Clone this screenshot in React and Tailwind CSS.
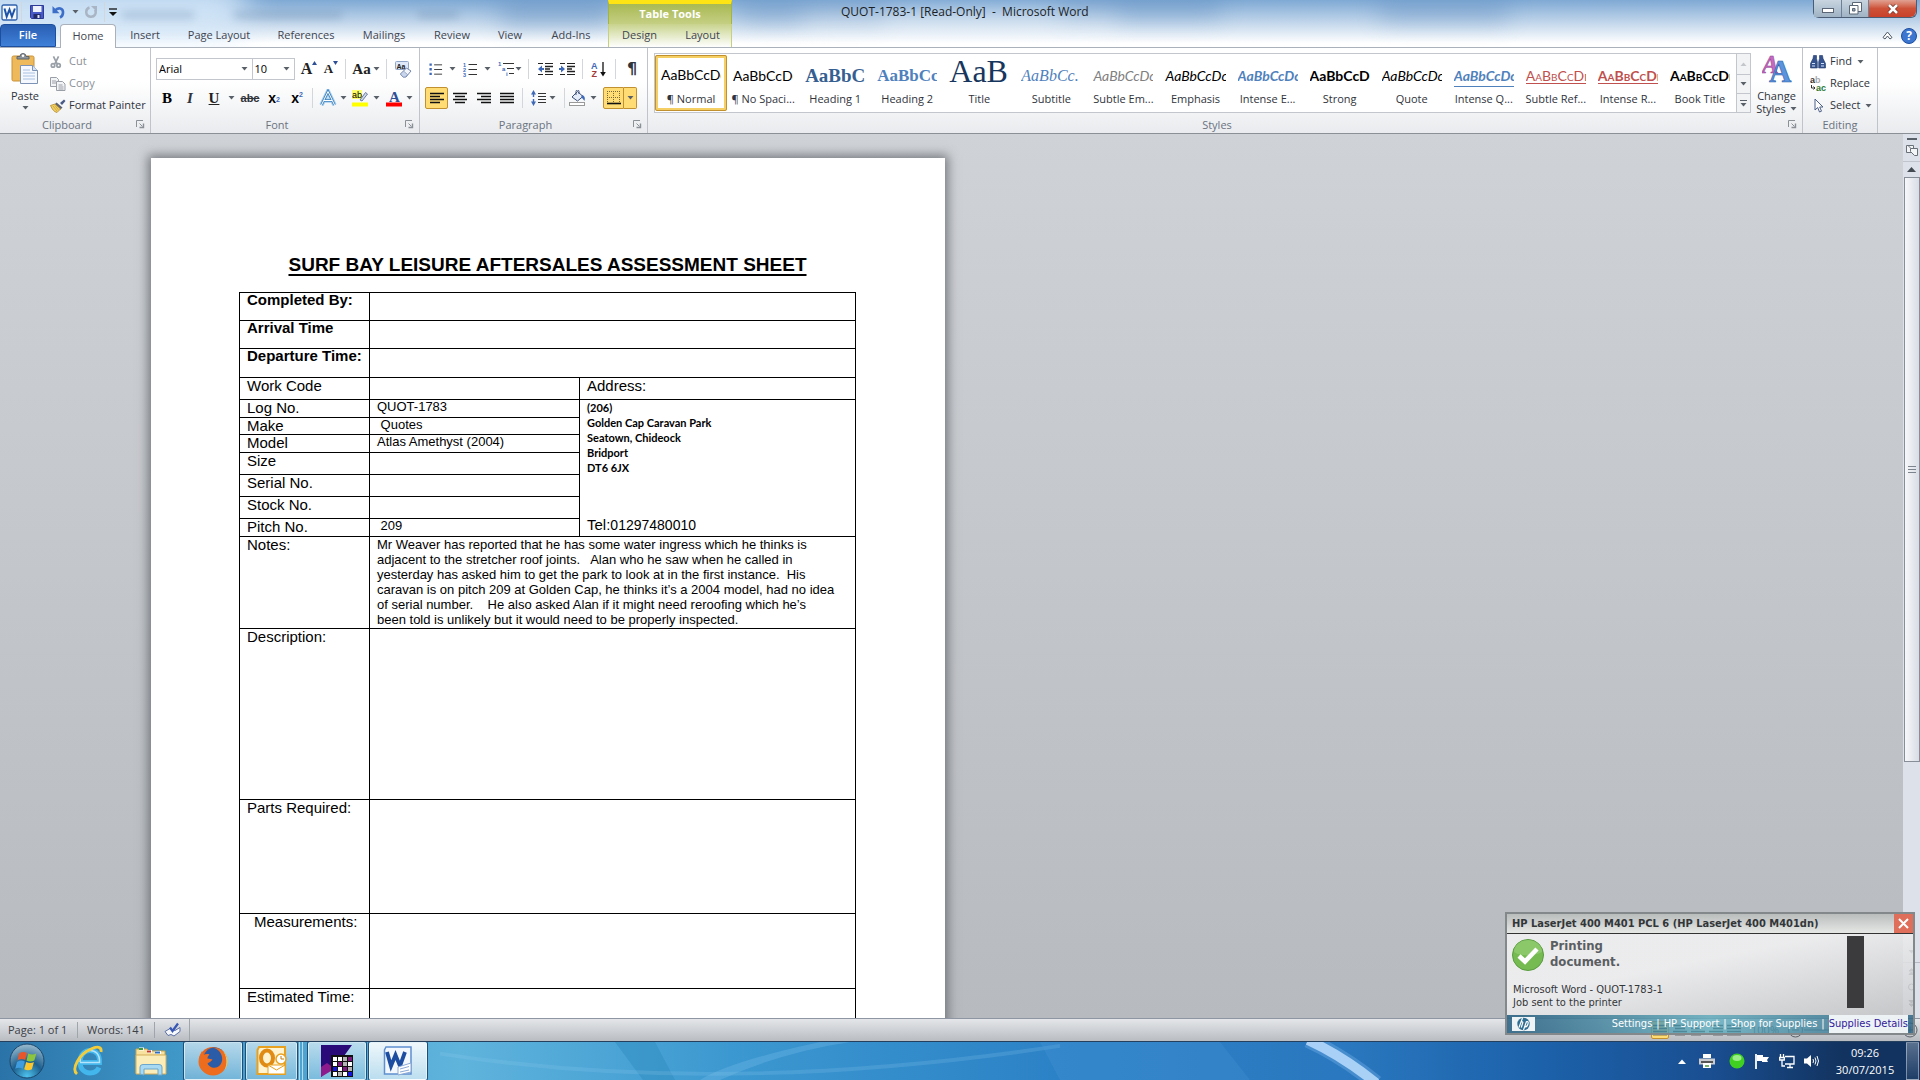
import React from "react";

const UI = "font-['Open_Sans','Noto_Sans',sans-serif]";
const DOC = "font-['Liberation_Sans',Arial,sans-serif]";

/* ---------- small shared pieces ---------- */

function Caret({ className = "" }) {
  return (
    <svg width="7" height="4" viewBox="0 0 7 4" className={"shrink-0 " + className} aria-hidden="true">
      <path d="M0.5 0h6L3.5 3.5z" fill="#5a6068" />
    </svg>
  );
}

function Cell({ label, w, children, className = "" }) {
  return (
    <button type="button" aria-label={label} className={`flex h-[22px] shrink-0 items-center justify-center ${w} ${className}`}>
      {children}
    </button>
  );
}

function Sep({ className = "" }) {
  return <span className={"h-5 w-px shrink-0 bg-[#d3d6db] " + className} />;
}

function Launcher({ label }) {
  return (
    <button type="button" aria-label={label} className="absolute right-1 bottom-1 h-2.5 w-2.5">
      <svg width="9" height="9" viewBox="0 0 9 9" fill="none" stroke="#8b9097">
        <path d="M0.5 7V0.5H7M3.5 3.5l3 3" />
        <path d="M7.5 3.5v4h-4" strokeWidth="1.4" />
      </svg>
    </button>
  );
}

function Group({ title, launcher, className = "", children }) {
  return (
    <section aria-label={title} className={"relative flex h-full shrink-0 flex-col border-r border-[#c0c4ca] " + className}>
      <div className="h-[69px]">{children}</div>
      <div className={"text-center leading-4 text-[#6b7380] " + (launcher ? "pr-4" : "")}>{title}</div>
      {launcher && <Launcher label={title + " options"} />}
    </section>
  );
}

/* ---------- title bar icons ---------- */

const WordLogo = () => (
  <svg width="17" height="17" viewBox="0 0 17 17">
    <rect x="1" y="1" width="15" height="15" rx="1.5" fill="#f4f8fd" stroke="#2f62ad" strokeWidth="1.3" />
    <path d="M3.500 4.500l2.200 8 2.800-7 2.400 7 3-8" fill="none" stroke="#1d54a8" strokeWidth="2" />
  </svg>
);
const Save = () => (
  <svg width="16" height="16" viewBox="0 0 16 16">
    <path d="M1.5 1.5h13v13h-12l-1-1z" fill="#4659c4" stroke="#2d3a96" />
    <rect x="4" y="2" width="8.5" height="6" fill="#eef2fb" />
    <rect x="4.5" y="10" width="7" height="4.5" fill="#1f2a66" />
    <rect x="8.5" y="11" width="2" height="3" fill="#dfe4f5" />
  </svg>
);
const Undo = () => (
  <svg width="14" height="14" viewBox="0 0 14 14">
    <path d="M3 5.500C6 2 11.500 3 11 8c-.2 2-1.500 3.800-3 4.500" fill="none" stroke="#3d6fc9" strokeWidth="2.600" />
    <path d="M0.500 1v7.200h7z" fill="#3d6fc9" />
  </svg>
);
const Redo = () => (
  <svg width="13" height="14" viewBox="0 0 13 14">
    <path d="M4.500 2.500C0 4 0 11 5.500 11.800c4 .4 6.500-3.500 4.500-7" fill="none" stroke="#a9b5c4" strokeWidth="2.500" />
    <path d="M6 1h6v6z" fill="#a9b5c4" />
  </svg>
);

/* ---------- ribbon icons ---------- */

const Paste = () => (
  <svg width="28" height="32" viewBox="0 0 28 32">
    <rect x="1" y="3" width="22" height="25" rx="1.500" fill="#eeb95a" stroke="#c8923a" />
    <path d="M6 6h12V3.500h-3a3 3 0 0 0-6 0H6z" fill="#8f959d" stroke="#5f656d" />
    <circle cx="12" cy="2.800" r="1.200" fill="#fff" />
    <path d="M9.500 12.500h12l5 5v13h-17z" fill="#f5f9ff" stroke="#7d93b5" />
    <path d="M21.500 12.500v5h5" fill="#d6e2f3" stroke="#7d93b5" />
    <path d="M12 17h7M12 20h12M12 23h12M12 26h12" stroke="#a9c0e2" />
  </svg>
);
const Cut = () => (
  <svg width="12" height="14" viewBox="0 0 14 15" fill="none" stroke="#9aa0a8" strokeWidth="2">
    <path d="M4 1l4.500 9M10 1L5.500 10" />
    <circle cx="3.500" cy="11.500" r="2" />
    <circle cx="10" cy="11.500" r="2" />
  </svg>
);
const Copy = () => (
  <svg width="16" height="14" viewBox="0 0 16 14" fill="#f3f4f6" stroke="#9a9fa7">
    <path d="M.5.5h6l2 2v7h-8z" />
    <path d="M2 4h4M2 6h4" />
    <path d="M6.500 4.500h6l2.500 2.500v6.500H6.500z" />
    <path d="M8.500 8h4M8.500 10h5M8.500 12h5" />
  </svg>
);
const Painter = () => (
  <svg width="16" height="14" viewBox="0 0 16 14">
    <path d="M10 4l4-3.500 1.500 1.500-3.500 4z" fill="#4a5a86" />
    <path d="M6.500 3.500l6 5-2 2-6-5z" fill="#5b6172" />
    <path d="M.5 6.500l4.500-1.500 5.500 5L7 13.500C4 13 2 10 .5 6.500z" fill="#f0cf63" stroke="#b48a2c" strokeWidth=".8" />
    <path d="M3 7l4 5M5 6.500l3.500 4.500" stroke="#c59a36" strokeWidth=".7" />
  </svg>
);
const ClearFormat = () => (
  <svg width="17" height="17" viewBox="0 0 17 17">
    <rect x=".5" y=".5" width="13" height="8" rx="1" fill="#dfe9f7" stroke="#8fa6c8" />
    <text x="1.500" y="7.500" fontSize="7" fontWeight="700" fill="#222" className="font-['Liberation_Sans',sans-serif]">Aa</text>
    <path d="M5.500 13l6-6 4.500 3-5 6H8z" fill="#f3f6fb" stroke="#7287b0" />
    <path d="M5.500 13l3-3 4 3.500-2 2.500H8z" fill="#c9d5ea" stroke="#7287b0" strokeWidth=".6" />
  </svg>
);
const Bullets = () => (
  <svg width="15" height="15" viewBox="0 0 15 15">
    <path d="M5.500 2.500H14M5.500 7.500H14M5.500 12.500H14" stroke="#333" />
    <path d="M.5 1h2.500v2.500H.5zM.5 6h2.500v2.500H.5zM.5 11h2.500v2.500H.5z" fill="#3e68b8" />
  </svg>
);
const Numbers = () => (
  <svg width="15" height="15" viewBox="0 0 15 15">
    <path d="M5.500 2.500H14M5.500 7.500H14M5.500 12.500H14" stroke="#333" />
    <g fontSize="5.500" fontWeight="700" fill="#3e68b8" className="font-['Liberation_Sans',sans-serif]">
      <text x="0" y="4.500">1</text><text x="0" y="9.500">2</text><text x="0" y="14.500">3</text>
    </g>
  </svg>
);
const Multi = () => (
  <svg width="17" height="16" viewBox="0 0 17 16">
    <path d="M5 2.500H16M9 7.500H16M11 12.500H16" stroke="#333" />
    <g fontSize="6" fontWeight="700" fill="#3e68b8" className="font-['Liberation_Sans',sans-serif]">
      <text x="0" y="4.500">1</text><text x="4" y="10">a</text><text x="8" y="15">i</text>
    </g>
  </svg>
);
const Indent = ({ out }) => (
  <svg width="16" height="14" viewBox="0 0 16 14">
    <path d="M1 1.500H6M8 1.500h8M1 12.500H6M8 12.500h8" stroke="#222" />
    <path d="M8 4.500h8M8 7h5M8 9.500h8" stroke="#222" strokeWidth="1.500" />
    {out ? <path d="M5 3.500L1 7l4 3.500V8h2V6H5z" fill="#3e68b8" /> : <path d="M2 3.500L6 7l-4 3.500V8H0V6h2z" fill="#3e68b8" />}
  </svg>
);
const Sort = () => (
  <svg width="16" height="17" viewBox="0 0 16 17">
    <g fontSize="9" fontWeight="700" className="font-['Liberation_Sans',sans-serif]">
      <text x="0" y="7.500" fill="#3e68b8">A</text>
      <text x="0.500" y="16" fill="#a23a3a">Z</text>
    </g>
    <path d="M12 1v12" stroke="#111" strokeWidth="1.300" />
    <path d="M9.200 11h5.600L12 15.500z" fill="#111" />
  </svg>
);
const LINES = {
  left: "M0 1.500h14M0 4.500h10M0 7.500h14M0 10.500h10",
  center: "M0 1.500h14M2 4.500h10M0 7.500h14M2 10.500h10",
  right: "M0 1.500h14M4 4.500h10M0 7.500h14M4 10.500h10",
  justify: "M0 1.500h14M0 4.500h14M0 7.500h14M0 10.500h14",
};
const Align = ({ kind }) => (
  <svg width="14" height="12" viewBox="0 0 14 12"><path d={LINES[kind]} stroke="#111" strokeWidth="1.500" /></svg>
);
const Spacing = () => (
  <svg width="16" height="16" viewBox="0 0 16 16">
    <path d="M7 3.500h8M7 6.500h8M7 9.500h8M7 12.500h8" stroke="#333" strokeWidth="1.200" />
    <path d="M2.500 3v10" stroke="#3e68b8" strokeDasharray="4 2" strokeWidth="1.400" />
    <path d="M0 4.500L2.500 0 5 4.500zM0 11.500L2.500 16 5 11.500z" fill="#3e68b8" />
  </svg>
);
const Fill = () => (
  <svg width="17" height="16" viewBox="0 0 17 16">
    <path d="M3 7l5.500-5.500L14 6.500 8.500 11z" fill="#e6edf8" stroke="#3c4f78" />
    <path d="M7 5V1.500a1.500 1.500 0 0 1 3 0V4" fill="none" stroke="#3c4f78" />
    <path d="M13 5c2.500.5 3.500 2.500 2.500 6-1-1.500-2-3-3.500-3.500z" fill="#3e68b8" />
    <rect x=".5" y="12.500" width="15" height="3" fill="#fff" stroke="#999" />
  </svg>
);
const Borders = () => (
  <svg width="14" height="14" viewBox="0 0 14 14">
    <path d="M.5 0v12M6.500 0v12M12.500 0v12M0 .5h13M0 6.500h13" stroke="#7a6a3a" strokeDasharray="1 1" />
    <path d="M0 12.500h14" stroke="#111" strokeWidth="1.600" />
  </svg>
);
const ChangeStylesIcon = () => (
  <svg width="30" height="30" viewBox="0 0 30 30" className="font-['Liberation_Serif',serif]">
    <text x="0" y="20" fontSize="25" fontWeight="700" fontStyle="italic" fill="#c46ac0" stroke="#93408f" strokeWidth=".5">A</text>
    <text x="7" y="29" fontSize="31" fontWeight="700" fill="#5b93dd" stroke="#2c5ba6" strokeWidth=".6">A</text>
  </svg>
);
const Binoculars = () => (
  <svg width="16" height="14" viewBox="0 0 16 14" fill="#35548f" stroke="#1f3768" strokeWidth=".6">
    <path d="M3.500.5h3v3l.8 3.500v6H.5V8.500L3 3.500z" />
    <path d="M9.500.5h3L13 3.500l2.500 5V13H8.700V7l.8-3.500z" />
    <path d="M2 8.500h3M11 8.500h3M2 11h3M11 11h3" stroke="#cfe0fa" strokeWidth="1.200" />
  </svg>
);
const ReplaceIcon = () => (
  <svg width="17" height="16" viewBox="0 0 17 16">
    <g fontSize="9" fontWeight="700" className="font-['Liberation_Sans',sans-serif]">
      <text x="0" y="7" fill="#333">a</text><text x="5" y="7" fill="#aaa">b</text>
      <text x="6" y="15" fill="#2c7a35">ac</text>
    </g>
    <path d="M1.500 9v3h3M3.500 10.500L5 12l-1.500 1.500" fill="none" stroke="#333" />
  </svg>
);
const Pointer = () => (
  <svg width="10" height="15" viewBox="0 0 10 15"><path d="M1 1v11l2.700-2.500 1.800 4.500 2-.8-1.800-4.200H9z" fill="#fff" stroke="#4d6087" /></svg>
);

/* ---------- header ---------- */

const TABS = [
  ["Insert", "w-[58px]"], ["Page Layout", "w-[90px]"], ["References", "w-[84px]"], ["Mailings", "w-[72px]"],
  ["Review", "w-[64px]"], ["View", "w-[52px]"], ["Add-Ins", "w-[70px]"],
];

function Header() {
  return (
    <header className="relative overflow-hidden bg-linear-to-b from-[#7fa9d4] via-[#c6d9ec] to-white to-90%">
      <div aria-hidden="true" className="absolute inset-0">
        <div className="absolute -top-6 -left-10 h-16 w-72 rounded-full bg-[#d9ebfb] opacity-80 blur-lg" />
        <div className="absolute top-0 left-[500px] h-6 w-28 bg-[#5583b8] opacity-45 blur-md" />
        <div className="absolute top-0 left-[740px] h-5 w-36 bg-[#5583b8] opacity-40 blur-md" />
        <div className="absolute -top-1 left-[1060px] h-5 w-40 bg-[#5583b8] opacity-40 blur-md" />
        <div className="absolute top-0 left-[1380px] h-5 w-32 bg-[#5583b8] opacity-40 blur-md" />
        <div className="absolute top-3 left-[122px] h-1.5 w-[72px] bg-[#55779d] opacity-35 blur-xs" />
        <div className="absolute top-3 left-[234px] h-1.5 w-[108px] bg-[#55779d] opacity-35 blur-xs" />
        <div className="absolute top-3 left-[418px] h-1.5 w-10 bg-[#55779d] opacity-35 blur-xs" />
        <div className="absolute top-3 left-[800px] h-7 w-[320px] rounded-full bg-white opacity-30 blur-md" />
      </div>
      <div className="relative flex h-6">
        <div className="flex w-[608px] shrink-0 items-center">
          <span className="ml-px"><WordLogo /></span>
          <Sep className="ml-[3px] h-3.5 bg-[#7c93ad]" />
          <button type="button" aria-label="Save" className="ml-[7px]"><Save /></button>
          <button type="button" aria-label="Undo" className="ml-[7px]"><Undo /></button>
          <button type="button" aria-label="Undo list" className="ml-1.5"><Caret /></button>
          <button type="button" aria-label="Redo" className="ml-1.5"><Redo /></button>
          <Sep className="ml-1.5 h-3.5 bg-[#7c93ad]" />
          <button type="button" aria-label="Customise toolbar" className="ml-1">
            <svg width="8" height="8" viewBox="0 0 8 8"><path d="M0 1h8" stroke="#111" strokeWidth="1.300" /><path d="M0 4h8L4 8z" fill="#111" /></svg>
          </button>
        </div>
        <div className="w-[124px] shrink-0 border-x border-t-4 border-x-[#a5b537] border-t-[#ffe414] bg-linear-to-b from-[#a9b952] to-[#c5cf83] text-center text-[11px] leading-5 font-bold text-white">
          Table Tools
        </div>
        <h1 className="ml-[109px] grow text-[12px] leading-6 whitespace-pre text-[#1b1f26]">QUOT-1783-1 [Read-Only]  -  Microsoft Word</h1>
        <div className="mr-[3px] flex h-[18px] rounded-b-md border border-t-0 border-[#4a5d75]">
          <button type="button" aria-label="Minimise" className="flex w-7 items-center justify-center border-r border-[#6d8099] bg-linear-to-b from-[#c9d5e0] to-[#9fb3c4]">
            <span className="mt-1 h-[5px] w-3 border border-[#5a6675] bg-white" />
          </button>
          <button type="button" aria-label="Restore" className="flex w-[27px] items-center justify-center border-r border-[#6d8099] bg-linear-to-b from-[#c9d5e0] to-[#9fb3c4]">
            <svg width="13" height="13" viewBox="0 0 13 13" fill="#fff" stroke="#5a6675">
              <path d="M3.500.5h9v9h-9z" /><path d="M.5 3.500h8.500v8.500H.5z" /><path d="M3.500 6.500h2.500v2.500H3.500z" fill="#8fa3b5" />
            </svg>
          </button>
          <button type="button" aria-label="Close" className="flex w-[47px] items-center justify-center rounded-br-md bg-linear-to-b from-[#e0a192] via-[#cd5138] to-[#c9412a]">
            <svg width="12" height="10" viewBox="0 0 12 10"><path d="M2 1l8 8M10 1L2 9" stroke="#6d2c20" strokeWidth="4" /><path d="M2 1l8 8M10 1L2 9" stroke="#fff" strokeWidth="2.600" /></svg>
          </button>
        </div>
      </div>
      <nav aria-label="Ribbon tabs" className="relative flex h-6 items-stretch border-b border-[#aab1bb] text-[11px] text-[#3f4550]">
        <button type="button" className="w-14 rounded-t-sm border border-[#1d4f9e] bg-linear-to-b from-[#2a5fb3] to-[#3f80d8] font-semibold text-white">File</button>
        <button type="button" className="-mb-px ml-1 w-14 rounded-t-sm border border-b-0 border-[#aab1bb] bg-white">Home</button>
        {TABS.map(([name, w]) => (
          <button key={name} type="button" className={w}>{name}</button>
        ))}
        <div className="ml-0.5 flex w-[124px] shrink-0 border-x border-[#c7d17d] bg-linear-to-b from-[#c9d38c] to-white">
          <button type="button" className="w-1/2">Design</button>
          <button type="button" className="w-1/2 pl-1">Layout</button>
        </div>
        <div className="grow" />
        <button type="button" aria-label="Minimise ribbon" className="mr-2">
          <svg width="11" height="9" viewBox="0 0 11 9"><path d="M1 6.500L5.500 1 10 6.500 8 8 5.500 5 3 8z" fill="#fff" stroke="#4b5563" /></svg>
        </button>
        <button type="button" aria-label="Help" className="mr-[3px] h-4 w-4 self-center rounded-full border border-[#1f4fa0] bg-[#3c76cf] text-[12px] leading-[14px] font-bold text-white">?</button>
      </nav>
    </header>
  );
}

/* ---------- ribbon ---------- */

const CAL = "font-['Lato',sans-serif] text-[14px]";
const STYLES = [
  ["¶ Normal", "AaBbCcDc", CAL],
  ["¶ No Spaci...", "AaBbCcDc", CAL],
  ["Heading 1", "AaBbC(", "font-['Liberation_Serif',serif] text-[19px] font-bold text-[#365f91]"],
  ["Heading 2", "AaBbCc", "font-['Liberation_Serif',serif] text-[17px] font-bold text-[#4f81bd]"],
  ["Title", "AaB", "font-['Liberation_Serif',serif] text-[32px] text-[#17365d]"],
  ["Subtitle", "AaBbCc.", "font-['Liberation_Serif',serif] text-[16px] italic text-[#4f81bd]"],
  ["Subtle Em...", "AaBbCcDc", CAL + " italic text-[#808080]"],
  ["Emphasis", "AaBbCcDc", CAL + " italic"],
  ["Intense E...", "AaBbCcDc", CAL + " italic font-bold text-[#4f81bd]"],
  ["Strong", "AaBbCcDc", CAL + " font-bold"],
  ["Quote", "AaBbCcDc", CAL + " italic"],
  ["Intense Q...", "AaBbCcDc", CAL + " italic font-bold text-[#4f81bd] border-b border-[#4f81bd]"],
  ["Subtle Ref...", "AaBbCcDd", CAL + " [font-variant:small-caps] text-[#c0504d] underline underline-offset-2"],
  ["Intense R...", "AaBbCcDd", CAL + " [font-variant:small-caps] font-bold text-[#c0504d] underline underline-offset-2"],
  ["Book Title", "AaBbCcDd", CAL + " [font-variant:small-caps] font-bold"],
];

function Ribbon() {
  const serif = "font-['Liberation_Serif',serif] font-bold text-[#222]";
  return (
    <div className="relative z-10 flex h-[86px] border-b border-[#8b9097] bg-linear-to-b from-white from-40% to-[#e9ebee] text-[11px] text-[#30343b]">
      <Group title="Clipboard" launcher className="w-[151px]">
        <div className="flex pt-[5px]">
          <button type="button" className="flex w-[50px] flex-col items-center leading-4">
            <Paste /><span className="mt-[3px]">Paste</span><Caret className="mt-0.5" />
          </button>
          <div className="flex flex-col text-[#8b9097]">
            <button type="button" className="flex h-[17px] items-center"><span className="flex w-[19px]"><Cut /></span>Cut</button>
            <button type="button" className="mt-[5px] flex h-[17px] items-center"><span className="flex w-[19px]"><Copy /></span>Copy</button>
            <button type="button" className="mt-[5px] flex h-[17px] items-center whitespace-nowrap text-[#30343b]"><span className="flex w-[19px]"><Painter /></span>Format Painter</button>
          </div>
        </div>
      </Group>

      <Group title="Font" launcher className="w-[269px]">
        <div className="flex items-center pt-2.5 pl-[5px]">
          <label className="flex h-[22px] w-[98px] items-center border border-[#c3c7cd] bg-white pr-1">
            <input aria-label="Font name" defaultValue="Arial" className="w-full min-w-0 pl-0.5 text-black outline-none" /><Caret />
          </label>
          <label className="flex h-[22px] w-[43px] items-center border border-l-0 border-[#c3c7cd] bg-white pr-1">
            <input aria-label="Font size" defaultValue="10" className="w-full min-w-0 pl-0.5 text-black outline-none" /><Caret />
          </label>
          <Cell label="Grow font" w="w-6" className={serif + " ml-0.5 text-[16px]"}>A<svg width="5" height="4" className="mb-3"><path d="M0 4L2.500 0 5 4z" fill="#2d4f96" /></svg></Cell>
          <Cell label="Shrink font" w="w-5" className={serif + " text-[13px]"}>A<svg width="5" height="4" className="mb-3"><path d="M0 0h5L2.500 4z" fill="#2d4f96" /></svg></Cell>
          <Sep className="ml-1" />
          <Cell label="Change case" w="w-10" className={serif + " gap-0.5 text-[15px]"}>Aa<Caret /></Cell>
          <Sep />
          <Cell label="Clear formatting" w="w-8"><ClearFormat /></Cell>
        </div>
        <div className="flex items-center pt-[7px] pl-[5px]">
          <Cell label="Bold" w="w-[22px]" className={serif + " text-[15px] text-black"}>B</Cell>
          <Cell label="Italic" w="w-6" className="font-['Liberation_Serif',serif] text-[15px] font-bold italic">I</Cell>
          <Cell label="Underline" w="w-6" className={serif + " text-[15px] underline"}>U</Cell>
          <Cell label="Underline style" w="w-2.5"><Caret /></Cell>
          <Cell label="Strikethrough" w="w-7" className="font-['Liberation_Sans',sans-serif] text-[11px] font-bold line-through">abc</Cell>
          <Cell label="Subscript" w="w-5" className="font-['Liberation_Sans',sans-serif] text-[14px] font-bold text-black">x<sub className="text-[7px] text-[#3e68b8]">2</sub></Cell>
          <Cell label="Superscript" w="w-[26px]" className="font-['Liberation_Sans',sans-serif] text-[14px] font-bold text-black">x<sup className="text-[7px] text-[#3e68b8]">2</sup></Cell>
          <Sep className="ml-0.5" />
          <Cell label="Text effects" w="w-[36px]" className="gap-0.5 pl-1">
            <svg width="19" height="18" viewBox="0 0 19 18"><path d="M2.500 16L9 2.500 15.500 16M5 11.500h8" fill="none" stroke="#a9d0ee" strokeWidth="4.500" /><path d="M2.500 16L9 2.500 15.500 16M5 11.500h8" fill="none" stroke="#3f83c0" strokeWidth="2.600" /><path d="M2.500 16L9 2.500 15.500 16M5 11.500h8" fill="none" stroke="#fff" strokeWidth="1" /></svg>
            <Caret />
          </Cell>
          <Cell label="Highlight" w="w-[34px]" className="gap-1">
            <svg width="17" height="17" viewBox="0 0 17 17">
              <rect width="10" height="9" fill="#ffff6a" /><text x="0" y="8" fontSize="9" className="font-['Liberation_Sans',sans-serif]">ab</text>
              <path d="M8 10l5.500-7.500 2 1.500L10 11z" fill="#cfd9ea" stroke="#4c5f8a" strokeWidth=".8" /><rect y="12.500" width="16" height="4" fill="#ffff00" />
            </svg>
            <Caret />
          </Cell>
          <Cell label="Font colour" w="w-[33px]" className="gap-1">
            <svg width="16" height="17" viewBox="0 0 16 17"><text x="3" y="12" fontSize="15" fontWeight="700" fill="#2d4f96" className="font-['Liberation_Serif',serif]">A</text><rect y="12.500" width="16" height="4" fill="#f00" /></svg>
            <Caret />
          </Cell>
        </div>
      </Group>

      <Group title="Paragraph" launcher className="w-[228px]">
        <div className="flex items-center pt-2.5 pl-[9px]">
          <Cell label="Bullets" w="w-[27px]" className="gap-1.5"><Bullets /><Caret /></Cell>
          <Cell label="Numbering" w="w-[28px]" className="ml-[7px] gap-1.5"><Numbers /><Caret /></Cell>
          <Cell label="Multilevel list" w="w-[25px]" className="ml-1.5"><Multi /><Caret /></Cell>
          <Sep className="ml-1.5" />
          <Cell label="Decrease indent" w="w-[22px]" className="ml-[5px]"><Indent out /></Cell>
          <Cell label="Increase indent" w="w-[22px]"><Indent /></Cell>
          <Sep className="ml-1" />
          <Cell label="Sort" w="w-[32px]"><Sort /></Cell>
          <Sep />
          <Cell label="Show marks" w="w-[32px]" className="font-['DejaVu_Sans',sans-serif] text-[16px] font-bold">¶</Cell>
        </div>
        <div className="flex items-center pt-[7px] pl-[5px]">
          <Cell label="Align left" w="w-[23px]" className="rounded-xs border border-[#c2912f] bg-[#ffdc74]"><Align kind="left" /></Cell>
          <Cell label="Centre" w="w-6"><Align kind="center" /></Cell>
          <Cell label="Align right" w="w-6"><Align kind="right" /></Cell>
          <Cell label="Justify" w="w-[22px]"><Align kind="justify" /></Cell>
          <Sep className="ml-1" />
          <Cell label="Line spacing" w="w-[41px]" className="gap-0.5"><Spacing /><Caret /></Cell>
          <Sep />
          <Cell label="Shading" w="w-[36px]" className="gap-1"><Fill /><Caret /></Cell>
          <Cell label="Borders" w="w-[21px]" className="ml-0.5 rounded-l-xs border border-[#c2912f] bg-[#ffdc74]"><Borders /></Cell>
          <Cell label="Border options" w="w-[13px]" className="rounded-r-xs border border-l-0 border-[#c2912f] bg-[#ffdc74]"><Caret /></Cell>
        </div>
      </Group>

      <Group title="Styles" launcher className="min-w-0 flex-1">
        <div className="flex pt-[5px] pl-1.5">
          <div className="flex h-[60px] min-w-0 grow border border-[#c3c7cd] bg-white">
            <div className="grid min-w-0 grow grid-cols-15">
              {STYLES.map(([name, sample, cls], i) => (
                <button
                  key={name}
                  type="button"
                  className={
                    "mt-px flex h-14 min-w-0 flex-col items-center justify-between overflow-hidden rounded-xs " +
                    (i === 0 ? "border-3 border-[#f5cf63] px-[3px] pb-px outline outline-[#c2912f] -outline-offset-1" : "px-1.5 py-1")
                  }
                >
                  <span className="flex h-[30px] w-full items-center overflow-hidden whitespace-nowrap text-black">
                    <span className={cls + (name === "Title" ? " mb-1.5 leading-6" : " mt-1 leading-5")}>{sample}</span>
                  </span>
                  <span className="leading-4 whitespace-nowrap text-[#30343b]">{name}</span>
                </button>
              ))}
            </div>
            <div className="flex w-3.5 shrink-0 flex-col border-l border-[#c3c7cd] bg-[#f2f3f5]">
              <button type="button" aria-label="Previous styles" className="flex h-5 items-center justify-center opacity-30"><Caret className="rotate-180" /></button>
              <button type="button" aria-label="Next styles" className="flex h-5 items-center justify-center border-y border-[#c3c7cd]"><Caret /></button>
              <button type="button" aria-label="All styles" className="flex grow flex-col items-center justify-center gap-0.5"><span className="h-px w-[7px] bg-[#5a6068]" /><Caret /></button>
            </div>
          </div>
          <button type="button" className="flex w-[51px] shrink-0 flex-col items-center leading-[13px]">
            <ChangeStylesIcon />
            <span className="mt-1.5">Change</span>
            <span className="flex items-center gap-1">Styles <Caret /></span>
          </button>
        </div>
      </Group>

      <Group title="Editing" className="w-[75px]">
        <div className="flex flex-col pt-[5px] pl-[7px]">
          <button type="button" className="flex h-[17px] items-center"><span className="flex w-5"><Binoculars /></span>Find<Caret className="ml-[5px]" /></button>
          <button type="button" className="mt-[5px] flex h-[17px] items-center"><span className="flex w-5"><ReplaceIcon /></span>Replace</button>
          <button type="button" className="mt-[5px] flex h-[17px] items-center"><span className="flex w-5 pl-1"><Pointer /></span>Select<Caret className="ml-[5px]" /></button>
        </div>
      </Group>
      <div className="w-[42px] shrink-0" />
    </div>
  );
}

/* ---------- document ---------- */

function Row({ h, label, bold, children }) {
  return (
    <tr className={h}>
      <th scope="row" className={`border border-black pl-[7px] text-left align-top whitespace-nowrap ${bold ? "leading-[14px] font-bold" : "font-normal"}`}>{label}</th>
      <td colSpan={2} className="border border-black pl-[7px] align-top text-[13px] leading-[15px]">{children}</td>
    </tr>
  );
}

function SplitRow({ h, label, value = "", right }) {
  return (
    <tr className={h}>
      <th scope="row" className="border border-black pl-[7px] text-left align-top font-normal whitespace-nowrap">{label}</th>
      <td className="border border-black pl-[7px] align-top text-[13px] leading-[13px] whitespace-pre">{value}</td>
      {right}
    </tr>
  );
}

function Document() {
  return (
    <article className={DOC + " ml-[151px] h-[1123px] w-[794px] shrink-0 bg-white pt-24 pl-[88px] text-black shadow-[0_0_10px_3px_rgba(90,95,102,0.75)]"}>
      <h2 className="w-[617px] text-center text-[19px] leading-[22px] font-bold whitespace-nowrap underline decoration-2 underline-offset-3">SURF BAY LEISURE AFTERSALES ASSESSMENT SHEET</h2>
      <table className="mt-4 w-[617px] table-fixed border-collapse text-[15px] leading-4">
        <colgroup><col className="w-[130px]" /><col className="w-[210px]" /><col /></colgroup>
        <tbody>
          <Row h="h-7" label="Completed By:" bold />
          <Row h="h-7" label="Arrival Time" bold />
          <Row h="h-[29px]" label="Departure Time:" bold />
          <SplitRow h="h-[22px]" label="Work Code" right={<td className="border border-black pl-[7px] align-top">Address:</td>} />
          <SplitRow
            h="h-[18px]"
            label="Log No."
            value="QUOT-1783"
            right={
              <td rowSpan={7} className="border border-black pl-[7px] align-top">
                <address className="font-['Lato',sans-serif] text-[11px] leading-[15px] font-bold whitespace-pre-line not-italic">
                  {"(206)\nGolden Cap Caravan Park\nSeatown, Chideock\nBridport\nDT6 6JX"}
                </address>
                <p className="mt-[42px] leading-4">Tel:<span className="text-[14px]">01297480010</span></p>
              </td>
            }
          />
          <SplitRow h="h-[17px]" label="Make" value=" Quotes" />
          <SplitRow h="h-[18px]" label="Model" value="Atlas Amethyst (2004)" />
          <SplitRow h="h-[22px]" label="Size" />
          <SplitRow h="h-[22px]" label="Serial No." />
          <SplitRow h="h-[22px]" label="Stock No." />
          <SplitRow h="h-[18px]" label="Pitch No." value=" 209" />
          <Row h="h-[92px]" label="Notes:">
            <div className="whitespace-pre">
              {"Mr Weaver has reported that he has some water ingress which he thinks is\nadjacent to the stretcher roof joints.   Alan who he saw when he called in\nyesterday has asked him to get the park to look at in the first instance.  His\ncaravan is on pitch 209 at Golden Cap, he thinks it’s a 2004 model, had no idea\nof serial number.    He also asked Alan if it might need reroofing which he’s\nbeen told is unlikely but it would need to be properly inspected."}
            </div>
          </Row>
          <Row h="h-[171px]" label="Description:" />
          <Row h="h-[114px]" label="Parts Required:" />
          <Row h="h-[75px]" label={<span className="pl-[7px]">Measurements:</span>} />
          <Row h="h-[75px]" label="Estimated Time:" />
        </tbody>
      </table>
    </article>
  );
}

function ScrollBar() {
  return (
    <div className="flex w-[17px] shrink-0 flex-col items-center bg-[#dce1ea] pt-1">
      <span className="h-0.5 w-2.5 bg-[#5a6068]" />
      <button type="button" aria-label="Toggle ruler" className="mt-1">
        <svg width="12" height="12" viewBox="0 0 12 12" fill="#f4f5f7" stroke="#6a7078"><path d="M.5 1.500h7v7h-7z" /><path d="M4.500 4.500h7v7h-3l-4-4z" /><path d="M2 1.500l3 3" /></svg>
      </button>
      <button type="button" aria-label="Scroll up" className="mt-[5px] flex h-4 w-full items-center justify-center border-t border-[#c0c5cd]">
        <svg width="9" height="5"><path d="M0 5L4.500 0 9 5z" fill="#444a52" /></svg>
      </button>
      <div className="flex h-[585px] w-4 items-center justify-center border border-[#888e98] bg-linear-to-r from-[#f7f8fa] to-[#d8dce5]">
        <svg width="8" height="7"><path d="M0 .5h8M0 3.500h8M0 6.500h8" stroke="#7d838c" /></svg>
      </div>
      <div className="grow" />
      <div className="flex w-full flex-col items-center pb-1 text-[#555b64]">
        <Caret className="mb-1.5" />
        <svg width="17" height="54" viewBox="0 0 17 54" fill="none" stroke="#5a6068">
          <path d="M0 2.500h17" stroke="#b5bac3" />
          <path d="M6 11l2.500-2.500L11 11zM6 14.500l2.500-2.500 2.500 2.500z" fill="#5a6068" />
          <circle cx="8.500" cy="27" r="3" />
          <path d="M6 40.500h5L8.500 43zM6 44h5l-2.500 2.500z" fill="#5a6068" />
        </svg>
      </div>
    </div>
  );
}

/* ---------- status bar, notification, taskbar ---------- */

function StatusBar() {
  return (
    <footer className="flex h-[23px] shrink-0 items-center border-t border-[#8f96a3] bg-linear-to-b from-[#e4e6e9] to-[#b9bdc2] text-[11px] text-[#3c4047]">
      <span className="w-[78px] border-r border-[#a0a5ac] pl-2">Page: 1 of 1</span>
      <span className="w-[77px] border-r border-[#a0a5ac] pl-[9px]">Words: 141</span>
      <button type="button" aria-label="Proofing" className="flex h-full w-[35px] items-center justify-center border-r border-[#a0a5ac]">
        <svg width="17" height="16" viewBox="0 0 17 16"><path d="M1 9.500l5-3 5 2 5-3v4l-6 4.500-3-1.500-3 1z" fill="#f6f8fc" stroke="#5a6ea6" /><path d="M6 5.500l2.500 3.500L14 1.500" fill="none" stroke="#3657b5" strokeWidth="2.200" /></svg>
      </button>
      <div className="grow" />
      <span className="flex h-[18px] w-[18px] items-center justify-center rounded-xs border border-[#c2912f] bg-[#ffdc74]"><Align kind="justify" /></span>
      <span className="ml-1"><Align kind="center" /></span>
      <span className="ml-1"><Align kind="left" /></span>
      <span className="ml-1"><Align kind="right" /></span>
      <span className="ml-1"><Align kind="justify" /></span>
      <span className="ml-2.5">100%</span>
      <svg width="132" height="16" viewBox="0 0 132 16" className="mr-px ml-2" fill="none" stroke="#5a6068">
        <circle cx="8.500" cy="8" r="7" /><path d="M5 8h7M17 8h98" /><path d="M62 3h8v6l-4 4-4-4z" fill="#eef0f3" /><circle cx="123" cy="8" r="7" /><path d="M119.500 8h7M123 4.500v7" />
      </svg>
    </footer>
  );
}

function PrinterPopup() {
  return (
    <aside aria-label="Printer notification" className="absolute right-[5px] bottom-[45px] z-20 flex w-[410px] flex-col border-2 border-[#83888b] font-['DejaVu_Sans_Condensed','Noto_Sans',sans-serif] text-[#333639]">
      <div className="flex h-5 items-center justify-between border-b border-[#333] bg-linear-to-b from-[#b9bdbb] to-[#e6e8e6] pl-[5px]">
        <strong className="text-[11px] leading-5">HP LaserJet 400 M401 PCL 6 (HP LaserJet 400 M401dn)</strong>
        <button type="button" aria-label="Dismiss" className="flex h-[19px] w-[19px] items-center justify-center bg-[#df6f5a]">
          <svg width="11" height="11"><path d="M1 1l9 9M10 1L1 10" stroke="#fff" strokeWidth="2" /></svg>
        </button>
      </div>
      <div className="flex h-[81px] justify-between bg-linear-to-br from-[#f1f1f2]/90 from-40% to-[#c9cacc]/80 pr-[49px] pl-[5px]">
        <div>
          <div className="flex gap-1.5 pt-1">
            <svg width="32" height="33" viewBox="0 0 32 33"><circle cx="16" cy="17" r="15.500" fill="#75bb52" stroke="#5b9c40" /><path d="M2 14a14 12 0 0 1 28 0c-8 4-20 5-28 0z" fill="#9ad07c" opacity=".6" /><path d="M7 18l6 5.500L25 11" fill="none" stroke="#fff" strokeWidth="4.500" /></svg>
            <strong className="text-[13px] leading-4 text-[#5b5e62]">Printing<br />document.</strong>
          </div>
          <p className="mt-3 pl-px text-[11px] leading-[13px]">Microsoft Word - QUOT-1783-1<br />Job sent to the printer</p>
        </div>
        <div className="mt-0.5 h-[72px] w-[17px] bg-[#3b3b3d]" />
      </div>
      <div className="flex h-[18px] items-center justify-end bg-linear-to-r from-[#2f6585]/90 via-[#62afc0]/80 to-[#2f6585]/85 px-[5px] text-[11px] text-white">
        <svg width="23" height="14" viewBox="0 0 23 14" className="mr-auto"><rect width="23" height="14" fill="#eef3f6" /><circle cx="11.500" cy="7" r="6.200" fill="#2e6f93" /><path d="M10.500 1L7 10.500M8.700 5.500c2-1.500 2.500-.5 1.800 1L9.300 10.500M14.500 4.500L11.500 13M14 4.800c2.500-.8 2.500.5 1.800 2.700-.6 2-1.600 2.500-3 2.500" fill="none" stroke="#fff" strokeWidth="1.200" /></svg>
        <a href="#settings">Settings</a><span className="px-1">|</span>
        <a href="#support">HP Support</a><span className="px-1">|</span>
        <a href="#shop">Shop for Supplies</a><span className="px-1">|</span>
        <a href="#details" className="h-[18px] bg-white/90 leading-[18px] text-[#30209a]">Supplies Details</a>
      </div>
    </aside>
  );
}

const BTN = "flex h-[38px] items-center justify-center rounded-xs border border-white/60 bg-linear-to-b from-white/60 to-white/25 shadow-[0_0_0_1px_#1d4f78]";

function TaskBar() {
  return (
    <div className="relative flex h-[39px] shrink-0 items-center overflow-hidden border-t border-[#24405e] bg-[linear-gradient(90deg,#2a73a8_0%,#3f97c8_9%,#5fb4dc_24%,#3c98d0_38%,#2c82c6_55%,#2a78bf_70%,#1c62ab_80%,#1a4f92_89%,#12335f_96%)]">
      <svg aria-hidden="true" className="absolute inset-0 h-full w-full" viewBox="0 0 1920 39" preserveAspectRatio="none">
        <path d="M615 0h40l20 39h-32z" fill="#2f8cc0" opacity=".5" /><path d="M820 0q-90 20-120 39h20q60-28 130-39z" fill="#7cc0ea" opacity=".3" />
        <path d="M440 12q280 45 620-8" fill="none" stroke="#8fcdf0" strokeWidth="4" opacity=".2" />
        <path d="M1040 0h180l30 39h-190z" fill="#4a97da" opacity=".25" />
        <path d="M1308 -2Q1342 14 1376 42" fill="none" stroke="#7fb6ee" strokeWidth="16" opacity=".35" />
        <path d="M1308 -2Q1342 14 1376 42" fill="none" stroke="#b4d8fb" strokeWidth="10" opacity=".9" />
      </svg>
      <button type="button" aria-label="Start" className="relative ml-[9px]">
        <svg width="36" height="36" viewBox="0 0 36 36">
          <defs><radialGradient id="orb" cx=".5" cy=".95" r=".9"><stop offset="0" stopColor="#4fc3ee" /><stop offset=".5" stopColor="#1c5f8e" /><stop offset="1" stopColor="#8fb3c8" /></radialGradient></defs>
          <circle cx="18" cy="18" r="17" fill="url(#orb)" stroke="#1b466b" />
          <path d="M10 10.500q4-2.500 8-.5l-1.800 7q-4-2-7.700.5z" fill="#e8562b" />
          <path d="M19.300 10.500q4 2 8 0l-2 7q-4 2-7.800 0z" fill="#8cc63e" />
          <path d="M8 19q4-2.500 7.800-.5l-2 7.300q-4-2-7.500 0z" fill="#3f9ddf" />
          <path d="M17.200 19q4 2 7.700 0l-2 7.300q-4 2-7.700 0z" fill="#fbc62e" />
        </svg>
      </button>
      <button type="button" aria-label="Internet Explorer" className="relative ml-7">
        <svg width="32" height="32" viewBox="0 0 32 32">
          <path d="M7 17.500h19.500C27 9 22.500 5.500 17 5.500S7 10 7 17s4.500 11 10 11c4.500 0 7.500-2 9-5.500" fill="none" stroke="#43b6ec" strokeWidth="5" />
          <path d="M7 17.500h19.500C27 9 22.500 5.500 17 5.500S7 10 7 17" fill="none" stroke="#b5e4fb" strokeWidth="1.500" />
          <path d="M4 29C-2 24 6 9 18 4c6-3 11-2.500 10 3" fill="none" stroke="#f4cc3a" strokeWidth="2.800" />
        </svg>
      </button>
      <button type="button" aria-label="Explorer" className="relative ml-[29px]">
        <svg width="34" height="30" viewBox="0 0 34 30">
          <path d="M2 3h11l2 2h16v22H2z" fill="#f7e2a0" stroke="#c9a24a" /><path d="M5 1.500h5v3H5zM13 4h5v3h-5zM21 5h6v3h-6z" fill="#fff" /><path d="M5 2h4v2H5z" fill="#3f9b45" /><path d="M13 4.500h4v2h-4z" fill="#c3372f" /><path d="M21 5.500h5v2h-5z" fill="#2f6fc3" />
          <path d="M2 9h30v19H2z" fill="#fbedb9" stroke="#d2ad58" /><path d="M6 28V21q0-2.500 3-2.500h16q3 0 3 2.500v8h-4v-6H10v6z" fill="#a7d9f3" stroke="#6ba7cc" />
        </svg>
      </button>
      <button type="button" aria-label="Firefox" className={BTN + " relative ml-4 w-[58px]"}>
        <svg width="32" height="32" viewBox="0 0 32 32">
          <circle cx="16" cy="16" r="14" fill="#e8641b" /><circle cx="17.500" cy="13.500" r="11" fill="#2b5ca8" />
          <path d="M17 3c7-1 13 5 13 13 0 9-7 14.500-14 14.500S1.500 24.500 1.500 17c0-5 2-8 3.500-11l1.500 4c1.500-1 4-1.300 6-.5-1.500 1.500-2 2.500-2 4 2 .5 4 .5 5 1-1 2-4 3-5 4 1 3 6 5.500 10 3.500 5-2.500 6-9 3-14C22 5.500 20 4 17 3z" fill="#ee6c1d" />
          <path d="M26 6c5 5 6 13 1.500 19C31 18 29.500 11 26 6z" fill="#fbd64a" />
        </svg>
      </button>
      <button type="button" aria-label="Outlook" className={BTN + " relative ml-1 w-[51px]"}>
        <svg width="31" height="30" viewBox="0 0 31 30">
          <path d="M3 1h26v27H1.500V4z" fill="#fff3d0" stroke="#e8a11f" strokeWidth="2" /><ellipse cx="11" cy="12" rx="6" ry="7.500" fill="none" stroke="#e08c14" strokeWidth="4" />
          <circle cx="25" cy="13" r="5" fill="#fff" stroke="#e8a11f" strokeWidth="1.500" /><path d="M25 10v3h3" fill="none" stroke="#c07a10" />
          <path d="M12 19h17v9H12z" fill="#fff" stroke="#e8a11f" /><path d="M12 19l8.500 5 8.500-5" fill="none" stroke="#e8a11f" />
        </svg>
      </button>
      <span className="relative ml-0.5 h-[38px] w-1 border-x border-white/60" />
      <button type="button" aria-label="Sales application" className={BTN + " relative ml-[5px] w-[58px]"}>
        <svg width="32" height="33" viewBox="0 0 32 33">
          <path d="M0 0h31l-8 11H10v12L0 32z" fill="#2a0a78" /><path d="M0 22l6-4 4 3v5L0 32z" fill="#8d1a8d" />
          <rect x="10" y="10" width="22" height="22" fill="#111" />
          <path d="M12 12h4v4h-4zM17 12h4v4h-4zM12 17h4v4h-4zM27 17h4v4h-4zM17 22h4v4h-4zM12 27h4v4h-4zM22 27h4v4h-4z" fill="#fff" /><path d="M22 12h4v4h-4zM22 17h4v4h-4zM27 22h4v4h-4zM17 27h4v4h-4z" fill="#b5b5b5" /><path d="M27 12h4v4h-4zM17 17h4v4h-4zM22 22h4v4h-4z" fill="#7d1a7d" /><path d="M12 22h4v4h-4zM27 27h4v4h-4z" fill="#1616d8" />
        </svg>
      </button>
      <button type="button" aria-label="Word" className={BTN + " relative ml-[3px] w-[58px] from-white/90 to-white/60"}>
        <svg width="30" height="30" viewBox="0 0 30 30">
          <path d="M3 1h25v27H1.500V4z" fill="#f3f8fe" stroke="#5f8fd0" strokeWidth="1.500" /><path d="M4 6l4 14 4.500-11L17 20l5-14" fill="none" stroke="#1d4da0" strokeWidth="3.800" />
          <path d="M15 21l13-4v9l-13 3z" fill="#fff" stroke="#8aa9d6" /><path d="M17 23l9-2.500M17 26l9-2" stroke="#8aa9d6" />
        </svg>
      </button>
      <div className="grow" />
      <div className="relative flex items-center">
        <svg width="8" height="5" className="mr-[13px]"><path d="M0 5l4-4.500L8 5z" fill="#fff" /></svg>
        <svg width="16" height="16" viewBox="0 0 16 16" className="mr-3.5"><path d="M4 1h8v4H4z" fill="#fff" /><path d="M0 5.500h16v6H0z" fill="#c9ccd0" /><path d="M2 8h12v2H2z" fill="#555" /><path d="M4 10h8v5H4z" fill="#fff" /><path d="M6 12h4v2H6z" fill="#79b26b" /></svg>
        <svg width="16" height="16" className="mr-[9px]"><circle cx="8" cy="8" r="7.500" fill="#3fd022" /><ellipse cx="8" cy="5" rx="4.500" ry="3" fill="#b4f5a2" opacity=".8" /></svg>
        <svg width="16" height="16" viewBox="0 0 16 16" className="mr-[9px]"><path d="M2 1v15" stroke="#fff" strokeWidth="1.800" /><path d="M3 2h6v2h6l-2 3 1 2H8V8H3z" fill="#fff" /></svg>
        <svg width="16" height="16" viewBox="0 0 16 16" className="mr-[9px]" fill="none" stroke="#fff" strokeWidth="1.300"><path d="M6 3.500h9v7.500H6M8 14.500h6M11 11v3" /><path d="M1.500 1v3M4.500 1v3M.7 4.500h4.600v2.500H.7zM3 7v6h3" /></svg>
        <svg width="16" height="14" viewBox="0 0 16 14" className="mr-3"><path d="M0 4.500h3L7 1v12L3 9.500H0z" fill="#fff" /><path d="M9 5q1 2 0 4M11 3.500q2 3.500 0 7M13 2q3 5 0 10" fill="none" stroke="#fff" /></svg>
        <time className="w-[66px] text-center text-[11px] leading-[17px] text-white">09:26<br />30/07/2015</time>
        <button type="button" aria-label="Show desktop" className="ml-2 h-[38px] w-[13px] border border-white/40 bg-linear-to-b from-white/30 to-white/5" />
        <span className="w-px" />
      </div>
    </div>
  );
}

export default function App() {
  return (
    <div className={UI + " relative flex h-screen flex-col overflow-hidden"}>
      <Header />
      <Ribbon />
      <main className="flex min-h-0 flex-1 bg-linear-to-b from-[#cfd2d6] to-[#b7babe]">
        <div className="min-w-0 grow overflow-hidden pt-6"><Document /></div>
        <ScrollBar />
      </main>
      <StatusBar />
      <TaskBar />
      <PrinterPopup />
    </div>
  );
}
